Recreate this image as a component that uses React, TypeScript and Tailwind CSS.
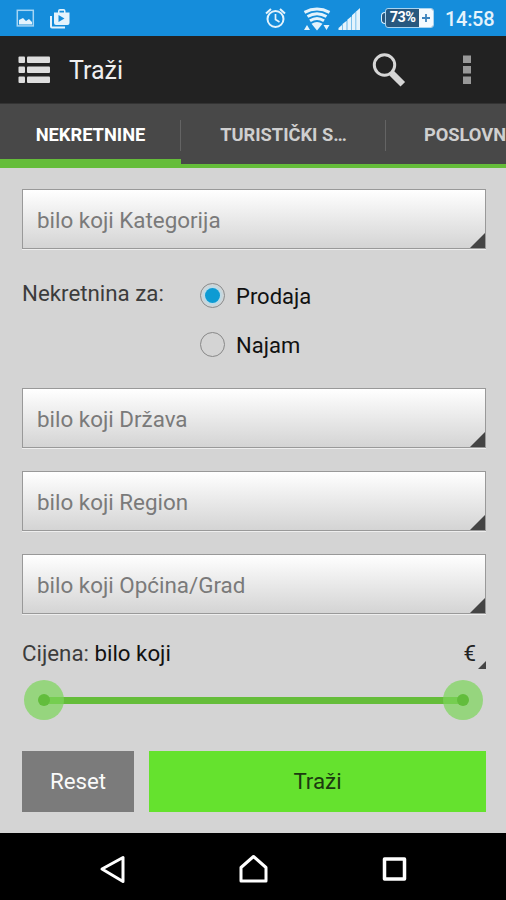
import { useState } from "react";
import clsx from "clsx";

const TABS = [
  { id: "nekretnine", label: "NEKRETNINE", width: "w-[181px]" },
  { id: "turisticki", label: "TURISTIČKI S…", width: "w-[205px]" },
  { id: "poslovni", label: "POSLOVN", width: "w-[158px]" },
];

const OFFERS = ["Prodaja", "Najam"];

function StatusBar() {
  return (
    <div className="flex h-9 shrink-0 items-center bg-[#158ddb] text-[#e4f3fc]">
      {/* Notifications */}
      <svg width="80" height="36" viewBox="0 0 80 36" fill="currentColor">
        <rect x="17.3" y="10.3" width="16" height="15.6" fill="none" stroke="#a5d5f4" strokeWidth="1.500" />
        <path d="M19 24.500V20l4-2 3 3 3-2 3 3v2.500z" />
        <path d="M50 16h2v10.500h13v2H52a2 2 0 0 1-2-2z" />
        <path
          fillRule="evenodd"
          d="M54 12.500h4V11a2 2 0 0 1 2-2h3.500a2 2 0 0 1 2 2v1.500h4V23a2 2 0 0 1-2 2H56a2 2 0 0 1-2-2zM59.500 12.500h4.500V10.700h-4.500zM58.500 15v7l6-3.500z"
        />
      </svg>

      {/* System icons */}
      <svg className="ml-auto" width="100" height="36" viewBox="262 0 100 36" fill="none" stroke="currentColor">
        <circle cx="275.500" cy="19" r="8" strokeWidth="2" />
        <path d="M275.500 14v5.500l4 2.500" strokeWidth="1.700" />
        <path d="M266 13.500l5-4.500M285 13.500l-5-4.500" strokeWidth="2" />
        <g strokeWidth="3">
          <path d="M304.500 12.300q12.500-6.500 25 0" />
          <path d="M307.500 16.500q9.500-5.500 19 0" />
          <path d="M310 20.700q7-4.500 14 0" />
        </g>
        <g fill="currentColor" stroke="none">
          <path d="M311.500 23.800q5.500-3.500 11 0L317 30.500z" />
          <path d="M304 30l3-5 3 5zM323.500 25h6l-3 5z" />
          <path d="M338.500 30v-2l3.500-3v5z" />
          <path d="M342.500 30v-6l4.200-3.300V30z" />
          <path d="M347.300 30V19.700l4.200-3.400V30z" />
          <path d="M352 30V15.300L360 8v22z" />
        </g>
        <path d="M355.800 12v18" stroke="#5fb2e8" strokeWidth="0.8" />
      </svg>

      {/* Battery */}
      <div className="ml-[19px] flex items-center">
        <div className="h-3 w-[4px] rounded-l-sm border-[1.500px] border-r-0 border-[#d9eefb] bg-[#28587f]" />
        <div className="flex h-5 w-[49px] overflow-hidden rounded-[3px] border-[1.500px] border-[#a9d4f0] bg-[#28587f]">
          <span className="w-[33px] text-center text-[14.5px] leading-[18px] font-bold tracking-[-0.6px] text-white">
            73%
          </span>
          <span className="flex flex-1 items-center justify-center bg-[#f4fafe]">
            <svg width="8" height="8" viewBox="0 0 8 8" stroke="#3b83bd" strokeWidth="1.800">
              <path d="M4 0v8M0 4h8" />
            </svg>
          </span>
        </div>
      </div>
      <span className="mt-px ml-[11px] w-[61px] text-[20px] leading-9 font-medium tracking-[-0.3px]">14:58</span>
    </div>
  );
}

function ActionBar() {
  return (
    <header className="flex h-[67px] shrink-0 items-center bg-[#222222]">
      <svg className="ml-[17px]" width="34" height="30" viewBox="0 0 34 30" fill="#dedede">
        {[1.5, 11.5, 21.5].map((y) => (
          <g key={y}>
            <rect x="1.500" y={y} width="6.500" height="6.500" rx="1" />
            <rect x="10" y={y} width="23" height="6.500" rx="1" />
          </g>
        ))}
      </svg>
      <h1 className="mt-[2px] ml-[18px] text-[25px] leading-8 text-[#f0f0f0]">Traži</h1>
      <svg className="ml-auto" width="36" height="36" viewBox="0 0 36 36" fill="none" stroke="#d6d6d6">
        <circle cx="14.500" cy="13" r="10.200" strokeWidth="3" />
        <path d="M21 20l4 4" strokeWidth="3" />
        <path d="M25.500 24.500l6.500 6.500" strokeWidth="6.500" strokeLinecap="square" strokeLinejoin="round" transform="translate(-1.500 -1)" />
      </svg>
      <svg className="mr-[34px] ml-[56px]" width="10" height="30" viewBox="0 0 10 30" fill="#999999">
        <rect x="1" y="0.500" width="8" height="7.500" />
        <rect x="1" y="11" width="8" height="7.500" />
        <rect x="1" y="21.500" width="8" height="7.500" />
      </svg>
    </header>
  );
}

function Corner({ size }: { size: number }) {
  return (
    <svg className="absolute right-0 bottom-0" width={size} height={size} viewBox="0 0 10 10" fill="#444444">
      <path d="M10 0v10H0z" />
    </svg>
  );
}

function SelectField({ label, className }: { label: string; className?: string }) {
  return (
    <button
      className={clsx(
        "relative block h-[60px] w-full shrink-0 border border-[#999999] bg-linear-to-b from-white to-[#d4d4d4] pt-[3px] pl-[14px] text-left text-[22.4px] text-[#7a7a7a] shadow-[0_1px_0_#eeeeee]",
        className,
      )}
    >
      {label}
      <Corner size={15} />
    </button>
  );
}

function Thumb() {
  return (
    <span className="z-10 flex size-10 items-center justify-center rounded-full bg-[#7cd65a]/70">
      <span className="size-3 rounded-full bg-[#62bd3c]" />
    </span>
  );
}

export default function App() {
  const [tab, setTab] = useState("nekretnine");
  const [offer, setOffer] = useState("Prodaja");

  return (
    <div className="flex h-[900px] w-[506px] flex-col overflow-hidden bg-[#d4d4d4] font-['Roboto',sans-serif]">
      <StatusBar />
      <ActionBar />

      {/* Tabs */}
      <nav className="flex h-[65px] shrink-0 overflow-hidden border-t border-[#333333] bg-[#484848]">
        {TABS.map((t, i) => (
          <button
            key={t.id}
            onClick={() => setTab(t.id)}
            className={clsx(
              "relative shrink-0 border-[#65bd3a] pt-px text-[18.3px] leading-[60px] font-bold",
              t.width,
              tab === t.id ? "border-b-9 text-white" : "border-b-4 text-[#cfcfcf]",
            )}
          >
            {t.label}
            {i < TABS.length - 1 && <span className="absolute top-4 right-0 h-[31px] w-px bg-[#646464]" />}
          </button>
        ))}
      </nav>

      {/* Search form */}
      <main className="flex h-[665px] shrink-0 flex-col pt-[21px] pr-[20px] pl-[22px]">
        <SelectField label="bilo koji Kategorija" />

        <div className="mt-[22px] flex h-[117px] shrink-0">
          <span className="mt-[7px] w-[178px] text-[22.3px] leading-[30px] text-[#3c3c3c]">Nekretnina za:</span>
          <div className="flex flex-col">
            {OFFERS.map((o) => (
              <button
                key={o}
                onClick={() => setOffer(o)}
                className="flex h-[49px] items-center gap-[11px] text-[22px] text-[#111111]"
              >
                <span className="flex size-[25px] items-center justify-center rounded-full border border-[#888888]">
                  {offer === o && (
                    <span className="size-[15px] rounded-full bg-[#0d9bd3] shadow-[0_0_3px_2px_#b5dcec]" />
                  )}
                </span>
                <span className="pt-px">{o}</span>
              </button>
            ))}
          </div>
        </div>

        <SelectField label="bilo koji Država" />
        <SelectField label="bilo koji Region" className="mt-[23px]" />
        <SelectField label="bilo koji Općina/Grad" className="mt-[23px]" />

        {/* Price range */}
        <div className="mt-[24px] flex h-[31px] shrink-0 items-start justify-between text-[22.3px] leading-[30px]">
          <p className="text-[#3c3c3c]">
            Cijena: <span className="text-[#111111]">bilo koji</span>
          </p>
          <span className="relative h-full pr-[10px] text-[#222222]">
            €
            <Corner size={8} />
          </span>
        </div>
        <div className="mt-[11px] flex h-10 shrink-0 items-center pr-[3px] pl-[2px]">
          <Thumb />
          <span className="-mx-5 h-[7px] flex-1 bg-[#65bd3a]" />
          <Thumb />
        </div>

        <div className="mt-[31px] flex h-[61px] shrink-0 gap-[15px] text-[22.3px]">
          <button className="w-[112px] bg-[#7b7b7b] text-[#fafafa]">Reset</button>
          <button className="flex-1 bg-[#65e22e] text-[#1c3a10]">Traži</button>
        </div>
      </main>

      {/* Android navigation */}
      <footer className="flex h-[67px] shrink-0 items-center justify-center gap-[110px] bg-black pt-1">
        <svg width="30" height="32" viewBox="0 0 30 32" fill="none" stroke="#ffffff" strokeWidth="3" strokeLinejoin="round">
          <path d="M26 4.500v24L5 16z" />
        </svg>
        <svg width="32" height="32" viewBox="0 0 32 32" fill="none" stroke="#ffffff" strokeWidth="3" strokeLinejoin="round">
          <path d="M16.500 3.500l12.500 11v13.500h-25V14.500z" />
        </svg>
        <svg width="30" height="32" viewBox="0 0 30 32" fill="none" stroke="#ffffff" strokeWidth="3.500" strokeLinejoin="round">
          <rect x="5.500" y="6" width="20" height="20" />
        </svg>
      </footer>
    </div>
  );
}
